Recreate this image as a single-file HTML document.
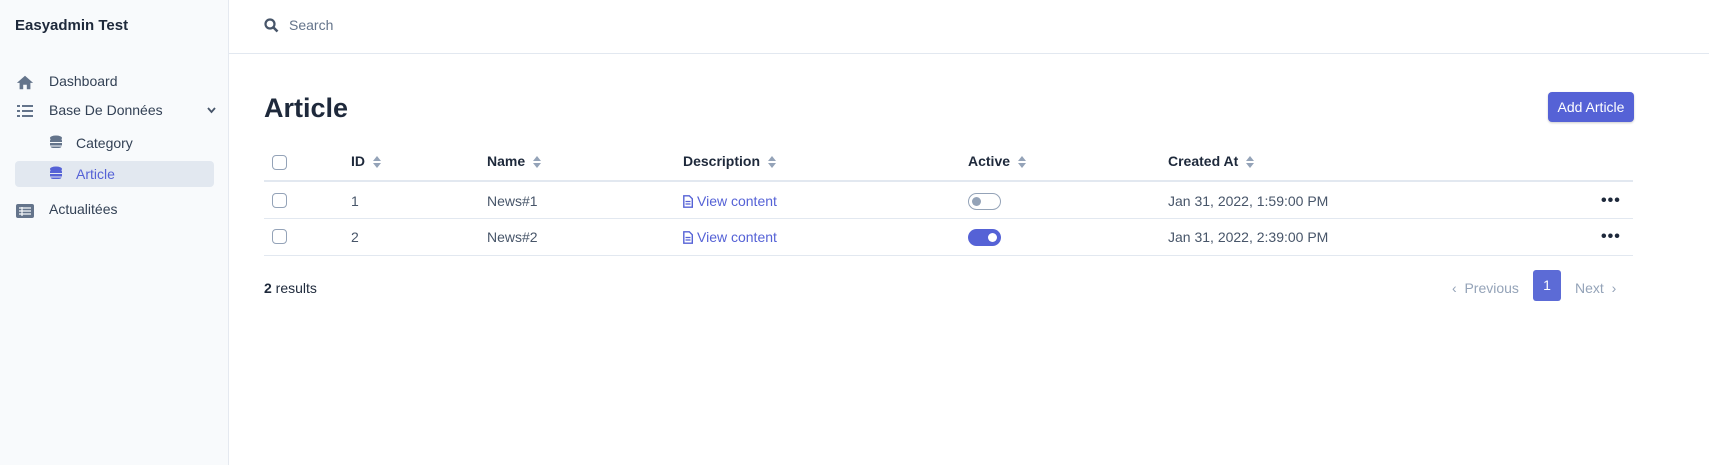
<!DOCTYPE html>
<html><head><meta charset="utf-8"><style>
*{box-sizing:border-box;margin:0;padding:0}
body{width:1709px;height:465px;overflow:hidden;font-family:"Liberation Sans",sans-serif;color:#1f2937;background:#fff;position:relative;font-size:14px}
.side{position:absolute;left:0;top:0;width:229px;height:465px;background:#f8fafc;border-right:1px solid #e5e9f0}
.brand{position:absolute;left:15px;top:17px;font-size:15px;font-weight:bold;color:#1e293b}
.mi{position:absolute;left:49px;font-size:14px;color:#334155;line-height:18px}
.ic{position:absolute;left:16px;width:18px;height:18px}
.hdr{position:absolute;left:229px;top:0;right:0;height:54px;border-bottom:1px solid #e2e8f0}
.abs{position:absolute;white-space:nowrap}
.th{font-weight:bold;font-size:14px;color:#1e293b;top:153px}
.td{font-size:14px;color:#475569;line-height:17px}
.cb{position:absolute;left:272px;width:15px;height:15px;border:1px solid #94a3b8;border-radius:4px;background:#fff}
.hl{position:absolute;left:264px;width:1369px;background:#e2e8f0}
.sort{display:inline-block;vertical-align:middle;margin-left:8px}
a{color:#5562d6;text-decoration:none}
.dots{position:absolute;left:1601px;font-size:16px;font-weight:bold;color:#1e293b;letter-spacing:1px}
</style></head><body>
<div class="side">
<div class="brand">Easyadmin Test</div>
<svg class="ic" style="top:73px" viewBox="0 0 20 18"><path d="M10 2L1 10h3v7h4v-5h4v5h4v-7h3z" fill="#64748b"/></svg>
<div class="mi" style="top:72px">Dashboard</div>
<svg class="ic" style="top:102px" viewBox="0 0 18 18"><g fill="#64748b"><rect x="1" y="3" width="3" height="2"/><rect x="1" y="8" width="3" height="2"/><rect x="1" y="13" width="3" height="2"/><rect x="6" y="3" width="11" height="2"/><rect x="6" y="8" width="11" height="2"/><rect x="6" y="13" width="11" height="2"/></g></svg>
<div class="mi" style="top:101px">Base De Données</div>
<svg class="abs" style="left:207px;top:107px" width="9" height="7" viewBox="0 0 9 7"><path d="M1 1l3.5 4L8 1" stroke="#475569" stroke-width="1.8" fill="none"/></svg>
<svg class="ic" style="left:50px;top:135px;width:12px;height:16px" viewBox="0 0 12 16"><g fill="#64748b"><ellipse cx="6" cy="3" rx="6" ry="2.5"/><rect x="0" y="3" width="12" height="10" rx="3"/></g><path d="M0 7.5h12M0 11h12" stroke="#f8fafc" stroke-width="1"/></svg>
<div class="mi" style="left:76px;top:134px">Category</div>
<div class="abs" style="left:15px;top:161px;width:199px;height:26px;background:#e2e8f0;border-radius:4px"></div>
<svg class="ic" style="left:50px;top:166px;width:12px;height:16px" viewBox="0 0 12 16"><g fill="#5562d6"><ellipse cx="6" cy="3" rx="6" ry="2.5"/><rect x="0" y="3" width="12" height="10" rx="3"/></g><path d="M0 7.5h12M0 11h12" stroke="#e2e8f0" stroke-width="1"/></svg>
<div class="mi" style="left:76px;top:165px;color:#5562d6">Article</div>
<svg class="ic" style="top:202px" viewBox="0 0 18 18"><rect x="0" y="2" width="18" height="14" rx="2" fill="#64748b"/><path d="M3 6h12M3 9h12M3 12h12M6 5v9" stroke="#f8fafc" stroke-width="1.2"/></svg>
<div class="mi" style="top:200px">Actualitées</div>
</div>
<div class="hdr"></div>
<svg class="abs" style="left:264px;top:18px" width="15" height="15" viewBox="0 0 15 15"><circle cx="6" cy="6" r="4.5" stroke="#475569" stroke-width="2.2" fill="none"/><path d="M9.5 9.5l4 4" stroke="#475569" stroke-width="2.6"/></svg>
<div class="abs" style="left:289px;top:17px;font-size:14px;color:#64748b">Search</div>
<div class="abs" style="left:264px;top:93px;font-size:27px;font-weight:bold;color:#1e293b">Article</div>
<div class="abs" style="left:1548px;top:92px;width:86px;height:30px;background:#5562d6;border-radius:4px;color:#fff;font-size:14px;line-height:30px;text-align:center;box-shadow:0 1px 2px rgba(0,0,0,.2)">Add Article</div>
<div class="cb" style="top:155px"></div>
<div class="abs th" style="left:351px">ID<svg class="sort" width="8" height="12" viewBox="0 0 8 12"><path d="M4 0L8 5H0zM4 12L0 7h8z" fill="#94a3b8"/></svg></div>
<div class="abs th" style="left:487px">Name<svg class="sort" width="8" height="12" viewBox="0 0 8 12"><path d="M4 0L8 5H0zM4 12L0 7h8z" fill="#94a3b8"/></svg></div>
<div class="abs th" style="left:683px">Description<svg class="sort" width="8" height="12" viewBox="0 0 8 12"><path d="M4 0L8 5H0zM4 12L0 7h8z" fill="#94a3b8"/></svg></div>
<div class="abs th" style="left:968px">Active<svg class="sort" width="8" height="12" viewBox="0 0 8 12"><path d="M4 0L8 5H0zM4 12L0 7h8z" fill="#94a3b8"/></svg></div>
<div class="abs th" style="left:1168px">Created At<svg class="sort" width="8" height="12" viewBox="0 0 8 12"><path d="M4 0L8 5H0zM4 12L0 7h8z" fill="#94a3b8"/></svg></div>
<div class="hl" style="top:180px;height:2px"></div>
<div class="cb" style="top:193px"></div>
<div class="abs td" style="left:351px;top:193px">1</div>
<div class="abs td" style="left:487px;top:193px">News#1</div>
<svg class="abs" style="left:683px;top:195px" width="10" height="13" viewBox="0 0 10 13"><path d="M0.8 0.8h5.5l3 3v8.4H0.8z" fill="none" stroke="#5562d6" stroke-width="1.4"/><path d="M2.5 6.5h5M2.5 9h5" stroke="#5562d6" stroke-width="1.2"/></svg>
<div class="abs td" style="left:697px;top:193px"><a>View content</a></div>
<div class="abs" style="left:968px;top:193px;width:33px;height:17px;border:1px solid #94a3b8;border-radius:9px;background:#fff"><div style="position:absolute;left:3px;top:3px;width:9px;height:9px;border-radius:50%;background:#94a3b8"></div></div>
<div class="abs td" style="left:1168px;top:193px">Jan 31, 2022, 1:59:00 PM</div>
<div class="dots" style="top:192px">•••</div>
<div class="hl" style="top:218px;height:1px"></div>
<div class="cb" style="top:229px"></div>
<div class="abs td" style="left:351px;top:229px">2</div>
<div class="abs td" style="left:487px;top:229px">News#2</div>
<svg class="abs" style="left:683px;top:231px" width="10" height="13" viewBox="0 0 10 13"><path d="M0.8 0.8h5.5l3 3v8.4H0.8z" fill="none" stroke="#5562d6" stroke-width="1.4"/><path d="M2.5 6.5h5M2.5 9h5" stroke="#5562d6" stroke-width="1.2"/></svg>
<div class="abs td" style="left:697px;top:229px"><a>View content</a></div>
<div class="abs" style="left:968px;top:229px;width:33px;height:17px;border-radius:9px;background:#5562d6"><div style="position:absolute;right:4px;top:4px;width:9px;height:9px;border-radius:50%;background:#fff"></div></div>
<div class="abs td" style="left:1168px;top:229px">Jan 31, 2022, 2:39:00 PM</div>
<div class="dots" style="top:228px">•••</div>
<div class="hl" style="top:255px;height:1px"></div>
<div class="abs" style="left:264px;top:280px;font-size:14px;color:#1e293b"><b>2</b> results</div>
<div class="abs" style="left:1452px;top:280px;font-size:14px;color:#94a3b8">‹&nbsp; Previous</div>
<div class="abs" style="left:1533px;top:270px;width:28px;height:31px;background:#5c6bd6;border-radius:3px;color:#fff;text-align:center;line-height:31px;font-size:14px">1</div>
<div class="abs" style="left:1575px;top:280px;font-size:14px;color:#94a3b8">Next &nbsp;›</div>
</body></html>
